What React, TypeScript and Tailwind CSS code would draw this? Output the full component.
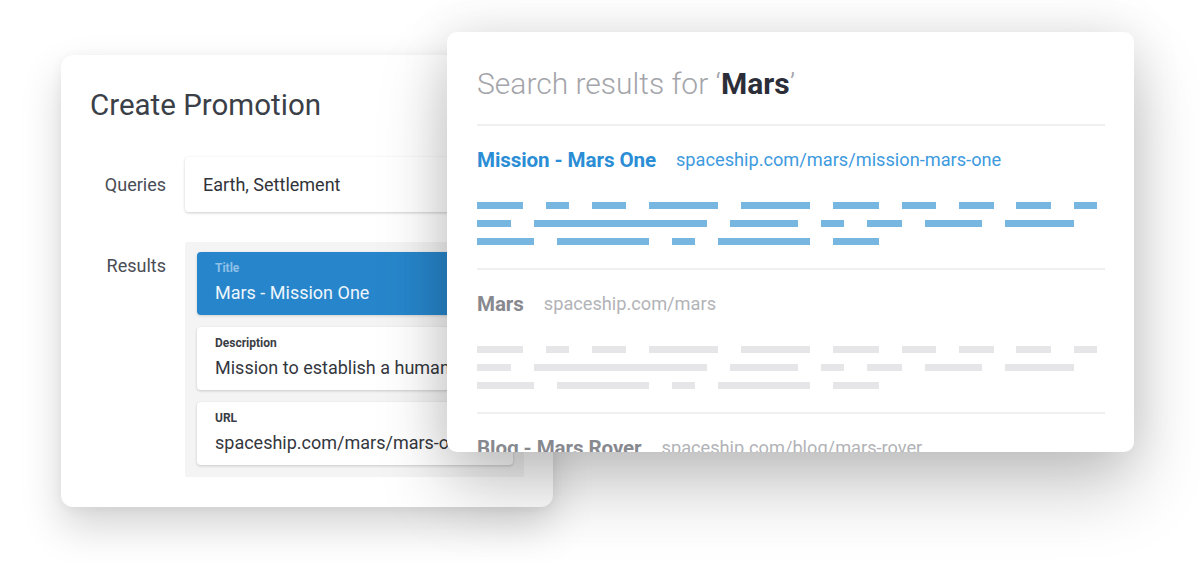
import React from "react";

const U = 11.48;

type Row = number[];
const rows: Row[] = [
  [4, 2, 3, 6, 6, 4, 3, 3, 3, 2],
  [3, 15, 6, 2, 3, 5, 6],
  [5, 8, 2, 8, 4],
];

function Bars({ color }: { color: string }) {
  return (
    <div className="flex flex-col gap-[11px]">
      {rows.map((r, i) => (
        <div key={i} className="flex" style={{ columnGap: `${2 * U}px` }}>
          {r.map((w, j) => (
            <div key={j} className={`h-[7px] ${color}`} style={{ width: `${w * U}px` }} />
          ))}
        </div>
      ))}
    </div>
  );
}

function Result({
  title,
  url,
  titleCls,
  urlCls,
  barCls,
}: {
  title: string;
  url: string;
  titleCls: string;
  urlCls: string;
  barCls: string;
}) {
  return (
    <div className="pt-[22px] pb-[23px]">
      <div className="flex items-center gap-[20px] h-[24px] whitespace-nowrap">
        <span className={`text-[20.6px] font-bold tracking-[-0.1px] ${titleCls}`}>{title}</span>
        <span className={`text-[18.2px] ${urlCls}`}>{url}</span>
      </div>
      <div className="mt-[30px]">
        <Bars color={barCls} />
      </div>
    </div>
  );
}

function Field({ label, value }: { label: string; value: string }) {
  return (
    <div className="bg-white rounded-[4px] shadow-[0_1px_3px_rgba(0,0,0,0.18)] h-[63px] pl-[18px] pt-[8px]">
      <div className="text-[12px] font-bold text-[#3a3d44] leading-[16px]">{label}</div>
      <div className="text-[18px] text-[#34373e] leading-[26px] mt-[4px] whitespace-nowrap overflow-hidden">{value}</div>
    </div>
  );
}

export default function App() {
  return (
    <div className="relative w-[1200px] h-[562px] bg-white overflow-hidden font-['Roboto',_'Liberation_Sans',_sans-serif]">
      {/* Left card */}
      <div className="absolute left-[61px] top-[55px] w-[492px] h-[452px] bg-white rounded-[12px] shadow-[0_20px_40px_rgba(0,0,0,0.17),0_2px_12px_rgba(0,0,0,0.05)] pt-[33px] pl-[29px]">
        <h1 className="text-[29.5px] leading-[34px] text-[#3b3f48]">Create Promotion</h1>
        <div className="flex mt-[35px]">
          <div className="w-[76px] mr-[19px] text-right text-[18px] text-[#4a4d55] leading-[55px]">Queries</div>
          <div className="w-[339px] h-[55px] bg-white rounded-[4px] shadow-[0_1px_3px_rgba(0,0,0,0.2)] flex items-center pl-[18px] text-[18px] text-[#303339]">
            Earth, Settlement
          </div>
        </div>
        <div className="flex mt-[30px]">
          <div className="w-[76px] mr-[19px] text-right text-[18px] text-[#4a4d55] leading-[24px] pt-[12px]">Results</div>
          <div className="w-[339px] bg-[#f4f4f5] rounded-[2px] pt-[10px] pb-[12px] pl-[12px] pr-[11px] flex flex-col gap-[12px]">
            <div className="bg-[#2786cb] rounded-[4px] h-[63px] pl-[18px] pt-[8px] shadow-[0_1px_3px_rgba(0,0,0,0.15)]">
              <div className="text-[12px] font-bold text-[#8ec0e8] leading-[16px]">Title</div>
              <div className="text-[18px] text-[#eef5fc] leading-[26px] mt-[4px]">Mars - Mission One</div>
            </div>
            <Field label="Description" value="Mission to establish a human settlement on Mars" />
            <Field label="URL" value="spaceship.com/mars/mars-one" />
          </div>
        </div>
      </div>

      {/* Right card */}
      <div className="absolute left-[447px] top-[32px] w-[687px] h-[420px] bg-white rounded-[10px] overflow-hidden shadow-[0_36px_70px_rgba(0,0,0,0.22),0_0_50px_rgba(0,0,0,0.1)] pt-[34px] pl-[30px] pr-[29px]">
        <div className="text-[30px] leading-[36px] text-[#a4a5aa] font-light whitespace-nowrap">
          Search results for ‘<span className="font-bold text-[#2b2e38]">Mars</span>’
        </div>
        <div className="mt-[22px] h-[2px] bg-[#f0f0f1]" />
        <Result
          title="Mission - Mars One"
          url="spaceship.com/mars/mission-mars-one"
          titleCls="text-[#2a8dd5]"
          urlCls="text-[#3d9ade]"
          barCls="bg-[#76b6e0]"
        />
        <div className="h-[2px] bg-[#f0f0f1]" />
        <Result
          title="Mars"
          url="spaceship.com/mars"
          titleCls="text-[#88898f]"
          urlCls="text-[#b2b3b7]"
          barCls="bg-[#e6e6e8]"
        />
        <div className="h-[2px] bg-[#f0f0f1]" />
        <Result
          title="Blog - Mars Rover"
          url="spaceship.com/blog/mars-rover"
          titleCls="text-[#88898f]"
          urlCls="text-[#b2b3b7]"
          barCls="bg-[#e6e6e8]"
        />
      </div>
    </div>
  );
}
